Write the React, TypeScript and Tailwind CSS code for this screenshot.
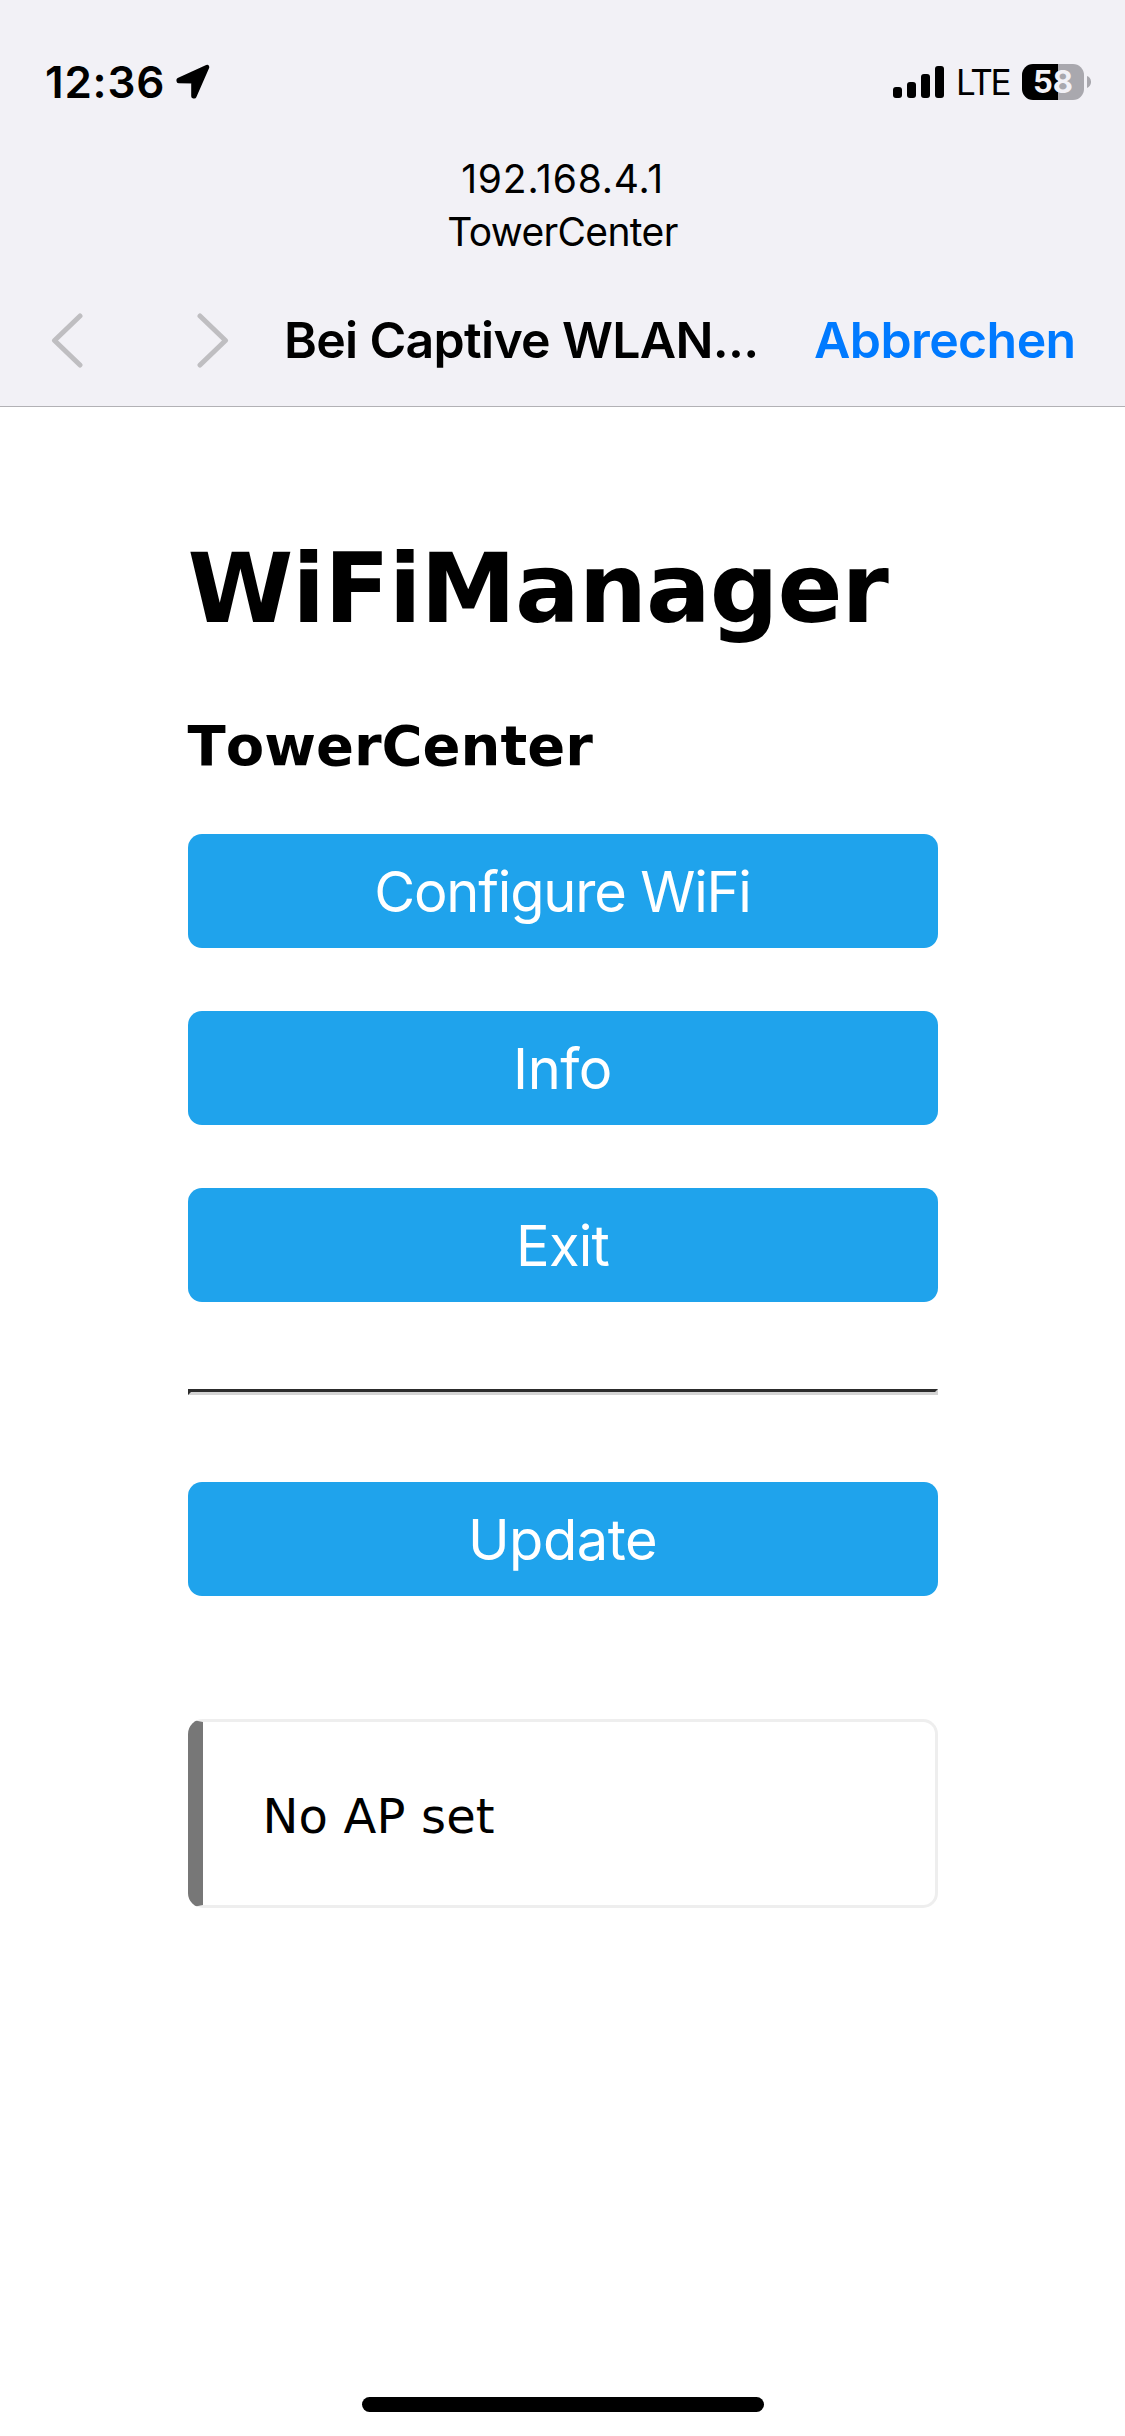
function LocationArrow() {
  return (
    <svg className="ml-[10px] h-[36px] w-[36px]" viewBox="0 0 36 36" fill="none">
      <path
        d="M3.6 16.1 L32.1 3.1 L19.3 32.3 L18.4 32.2 V17.3 L3.7 17.1 Z"
        fill="black"
        stroke="black"
        strokeWidth="4.4"
        strokeLinejoin="round"
      />
    </svg>
  );
}

function SignalBars() {
  return (
    <div className="flex h-[32px] items-end gap-[5px]">
      <span className="h-[11px] w-[9px] rounded-[3px] bg-black" />
      <span className="h-[16px] w-[9px] rounded-[3px] bg-black" />
      <span className="h-[24px] w-[9px] rounded-[3px] bg-black" />
      <span className="h-[32px] w-[9px] rounded-[3px] bg-black" />
    </div>
  );
}

function Battery() {
  return (
    <div className="flex items-center">
      <div className="flex h-[36px] w-[62px] items-center justify-center rounded-[11px] bg-[linear-gradient(90deg,#000_36px,#a9a8ae_36px)] text-[31px] leading-[36px] font-bold text-[#f2f1f6]">
        58
      </div>
      <svg className="ml-[3px] h-[12px] w-[4px]" viewBox="0 0 4 12">
        <path d="M0 0 C5.4 2 5.4 10 0 12 Z" fill="#a9a8ae" />
      </svg>
    </div>
  );
}

function Chevron({ direction }: { direction: "left" | "right" }) {
  return (
    <svg className="h-[55px] w-[32px]" viewBox="0 0 32 55" fill="none">
      <path
        d={direction === "left" ? "M29 3 L3.5 27.5 L29 52" : "M3 3 L28.5 27.5 L3 52"}
        stroke="#bfbec1"
        strokeWidth="5"
        strokeLinecap="round"
        strokeLinejoin="round"
      />
    </svg>
  );
}

function MenuButton({ label, tracking }: { label: string; tracking: string }) {
  return (
    <button
      className={`h-[114px] w-full rounded-[14px] bg-[#1fa3ec] pt-[2px] text-center font-['Inter',sans-serif] text-[56px] leading-[112px] text-white ${tracking}`}
    >
      {label}
    </button>
  );
}

export default function App() {
  return (
    <div className="flex h-[2436px] w-[1125px] flex-col overflow-hidden bg-white font-['Inter',sans-serif] text-black">
      <header className="flex h-[407px] shrink-0 flex-col border-b border-[#b2b1b5] bg-[#f2f1f6]">
        <div className="mt-[60px] flex h-[44px] items-center justify-between pr-[34px] pl-[45px]">
          <div className="flex items-center">
            <span className="text-[44px] leading-[44px] font-semibold tracking-[0.8px]">12:36</span>
            <LocationArrow />
          </div>
          <div className="flex items-center">
            <SignalBars />
            <span className="ml-[12px] w-[66px] text-[35px] leading-[44px] tracking-[-2.2px]">LTE</span>
            <Battery />
          </div>
        </div>

        <div className="mt-[48px] flex flex-col items-center text-[39px] leading-[53px]">
          <span className="tracking-[0.8px]">192.168.4.1</span>
          <span className="tracking-[-0.65px]">TowerCenter</span>
        </div>

        <nav className="mt-[52px] flex h-[60px] items-center pl-[51px] text-[50px] leading-[60px] font-semibold whitespace-nowrap">
          <Chevron direction="left" />
          <div className="ml-[114px] flex">
            <Chevron direction="right" />
          </div>
          <span className="ml-[55px] w-[530px] tracking-[-0.7px]">Bei Captive WLAN...</span>
          <span className="tracking-[-0.6px] text-[#007aff]">Abbrechen</span>
        </nav>
      </header>

      <main className="mx-auto flex w-[750px] grow flex-col font-['DejaVu_Sans',sans-serif]">
        <h1 className="mt-[126px] text-[96px] leading-[112px] font-bold tracking-[-1.05px]">WiFiManager</h1>
        <h3 className="mt-[68px] text-[56px] leading-[66px] font-bold [font-kerning:none]">TowerCenter</h3>

        <div className="mt-[55px] flex flex-col gap-[63px]">
          <MenuButton label="Configure WiFi" tracking="tracking-[-1.2px]" />
          <MenuButton label="Info" tracking="tracking-[-0.5px]" />
          <MenuButton label="Exit" tracking="tracking-[-0.8px]" />
        </div>

        <hr className="mt-[87px] mb-[87px] h-[6px] border-t-[3px] border-r-[3px] border-b-[3px] border-l-[3px] border-t-[#2c2c2c] border-r-[#d4d4d4] border-b-[#d4d4d4] border-l-[#2c2c2c]" />

        <MenuButton label="Update" tracking="tracking-[-0.5px]" />

        <div className="mt-[123px] flex h-[189px] items-center rounded-[15px] border-[3px] border-l-[15px] border-[#eee] border-l-[#777] pt-[4px] pl-[60px] text-[48px] leading-[56px] tracking-[0.15px]">
          No AP set
        </div>
      </main>

      <div className="mx-auto mb-[24px] h-[15px] w-[402px] shrink-0 rounded-full bg-black" />
    </div>
  );
}
